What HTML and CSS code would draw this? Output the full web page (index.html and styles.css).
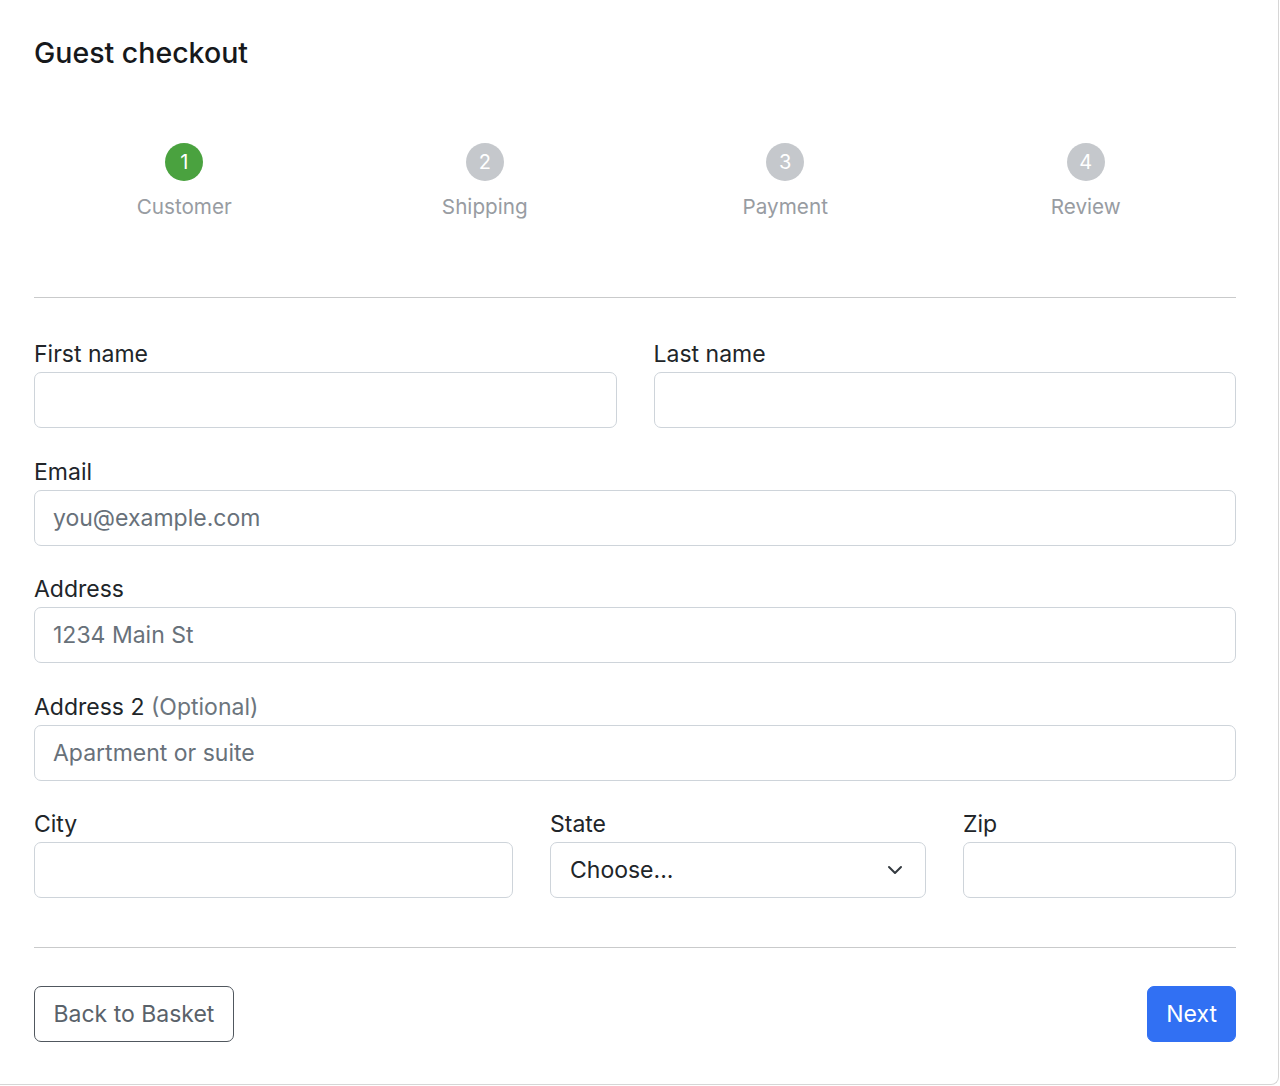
FILE: index.html
```html
<!DOCTYPE html>
<html lang="en">
<head>
<meta charset="utf-8">
<title>Guest checkout</title>
<link rel="stylesheet" href="styles.css">
</head>
<body>
<div class="card">
  <h1 class="title">Guest checkout</h1>

  <ol class="steps">
    <li class="step step-active"><span class="step-num">1</span><span class="step-label">Customer</span></li>
    <li class="step"><span class="step-num">2</span><span class="step-label">Shipping</span></li>
    <li class="step"><span class="step-num">3</span><span class="step-label">Payment</span></li>
    <li class="step"><span class="step-num">4</span><span class="step-label">Review</span></li>
  </ol>

  <hr class="divider divider-top">

  <form class="form">
    <div class="row row-2">
      <div class="field">
        <label class="label" for="first">First name</label>
        <input class="input" id="first" type="text">
      </div>
      <div class="field">
        <label class="label" for="last">Last name</label>
        <input class="input" id="last" type="text">
      </div>
    </div>
    <div class="field">
      <label class="label" for="email">Email</label>
      <input class="input" id="email" type="email" placeholder="you@example.com">
    </div>
    <div class="field">
      <label class="label" for="address">Address</label>
      <input class="input" id="address" type="text" placeholder="1234 Main St">
    </div>
    <div class="field">
      <label class="label" for="address2">Address 2 <span class="muted">(Optional)</span></label>
      <input class="input" id="address2" type="text" placeholder="Apartment or suite">
    </div>
    <div class="row row-3">
      <div class="field">
        <label class="label" for="city">City</label>
        <input class="input" id="city" type="text">
      </div>
      <div class="field">
        <label class="label" for="state">State</label>
        <div class="select-wrap">
          <select class="input select" id="state">
            <option>Choose...</option>
          </select>
          <svg class="chevron" viewBox="0 0 16 16" width="16" height="16" aria-hidden="true"><path d="M2 5l6 6 6-6" fill="none" stroke="#343a40" stroke-width="2" stroke-linecap="round" stroke-linejoin="round"/></svg>
        </div>
      </div>
      <div class="field">
        <label class="label" for="zip">Zip</label>
        <input class="input" id="zip" type="text">
      </div>
    </div>
  </form>

  <hr class="divider divider-bottom">

  <div class="actions">
    <button class="btn btn-outline" type="button">Back to Basket</button>
    <button class="btn btn-primary" type="button">Next</button>
  </div>
</div>
</body>
</html>
```

FILE: styles.css
```css
* { box-sizing: border-box; }

html, body {
  margin: 0;
  padding: 0;
  background: #ffffff;
}

body {
  font-family: Inter, "Liberation Sans", Arial, sans-serif;
  color: #212529;
  font-size: 23px;
}

.card {
  width: 1279px;
  padding: 35px 42px 42px 34px;
  border-right: 1px solid #d6d6d6;
  border-bottom: 1px solid #d6d6d6;
  border-bottom-right-radius: 8px;
}

.title {
  margin: 0;
  font-size: 28.5px;
  line-height: 35px;
  font-weight: 500;
  color: #16181b;
}

.steps {
  list-style: none;
  margin: 73px 0 0 0;
  padding: 0;
  display: grid;
  grid-template-columns: repeat(4, 1fr);
}

.step {
  display: flex;
  flex-direction: column;
  align-items: center;
}

.step-num {
  width: 38px;
  height: 38px;
  border-radius: 50%;
  background: #c5c8cc;
  color: #ffffff;
  display: flex;
  align-items: center;
  justify-content: center;
  font-size: 20px;
  line-height: 1;
}

.step-active .step-num {
  background: #4aa23f;
}

.step-label {
  margin-top: 11px;
  font-size: 20.7px;
  line-height: 30px;
  color: #989ca2;
}

.divider {
  border: 0;
  border-top: 1px solid #c9cacb;
  margin: 0;
}

.divider-top { margin-top: 75px; }

.form {
  margin-top: 42px;
  display: flex;
  flex-direction: column;
  gap: 29.5px;
}

.row {
  display: grid;
  column-gap: 37px;
}

.row-2 { grid-template-columns: 1fr 1fr; }
.row-3 { grid-template-columns: 479px 376px 1fr; }

.field {
  display: flex;
  flex-direction: column;
}

.label {
  display: block;
  line-height: 28px;
  margin-bottom: 4px;
  color: #212529;
}

.muted { color: #6c757d; }

.input {
  display: block;
  width: 100%;
  height: 56px;
  padding: 0 18px;
  border: 1px solid #ced4da;
  border-radius: 7px;
  background: #ffffff;
  font-family: inherit;
  font-size: 23px;
  color: #212529;
  outline: none;
}

.input::placeholder { color: #68717a; opacity: 1; }

.select-wrap { position: relative; }

.select {
  appearance: none;
  -webkit-appearance: none;
  padding-left: 19px;
  padding-right: 48px;
}

.chevron {
  position: absolute;
  right: 23px;
  top: 20px;
  pointer-events: none;
}

.divider-bottom { margin-top: 49px; }

.actions {
  margin-top: 38px;
  display: flex;
  justify-content: space-between;
}

.btn {
  height: 56px;
  padding: 0 18.5px;
  border-radius: 7px;
  font-family: inherit;
  font-size: 23px;
  border: 1px solid transparent;
  cursor: pointer;
}

.btn-outline {
  background: #ffffff;
  border-color: #50575e;
  color: #5a626a;
}

.btn-primary {
  background: #3170f3;
  border-color: #3170f3;
  color: #ffffff;
  padding: 0 18px;
}
```
